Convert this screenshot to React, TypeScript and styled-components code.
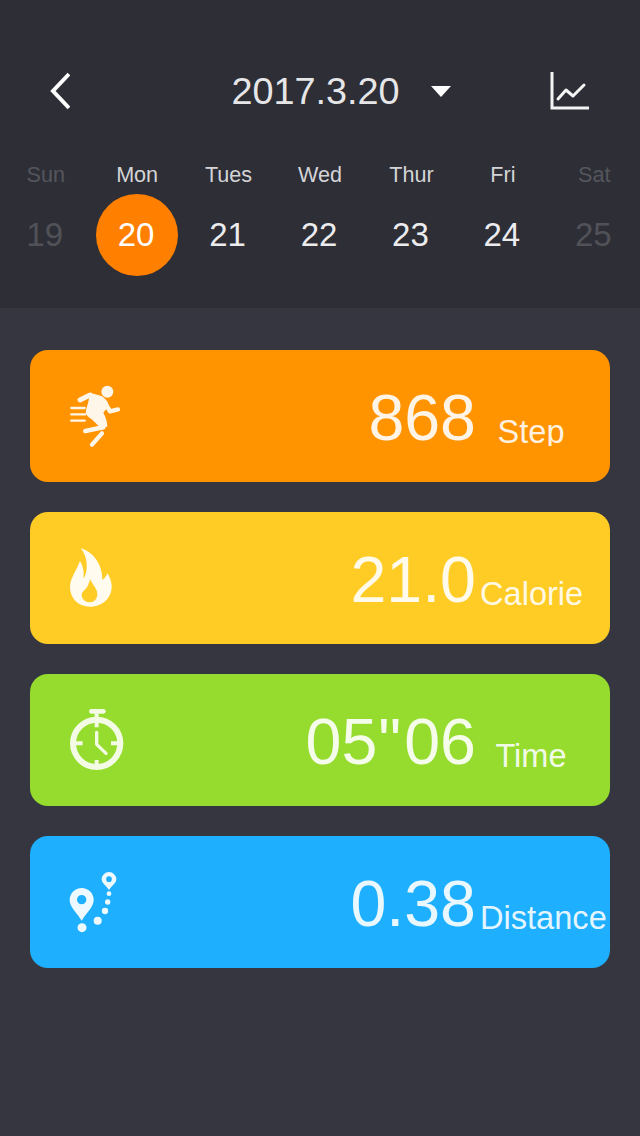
import React from "react";
import styled, { createGlobalStyle } from "styled-components";

const Global = createGlobalStyle`
  html, body { margin: 0; padding: 0; background: #353640; }
  body { font-family: "Liberation Sans", Arial, sans-serif; }
`;

const Page = styled.div`
  width: 640px;
  height: 1136px;
  background: #353640;
  overflow: hidden;
`;

const Header = styled.header`
  height: 308px;
  background: #2d2e36;
  box-sizing: border-box;
  padding-top: 72px;
`;

const TopBar = styled.div`
  display: grid;
  grid-template-columns: 1fr auto 1fr;
  align-items: center;
  height: 38px;
  padding: 0 50px;
`;

const BackIcon = styled.svg`
  justify-self: start;
`;

const ChartIcon = styled.svg`
  justify-self: end;
`;

const DateButton = styled.div`
  display: flex;
  align-items: center;
  gap: 31px;
  margin-left: 42px;
  font-size: 37.8px;
  line-height: 38px;
  color: #e6e6e8;
`;

const Caret = styled.span`
  width: 0;
  height: 0;
  border-left: 10px solid transparent;
  border-right: 10px solid transparent;
  border-top: 11px solid #ffffff;
`;

const Week = styled.div`
  display: grid;
  grid-template-columns: repeat(7, 1fr);
  margin-top: 50px;
`;

const Day = styled.div`
  display: flex;
  flex-direction: column;
  align-items: center;
`;

const DayName = styled.div<{ $muted: boolean }>`
  font-size: 21.6px;
  line-height: 30px;
  color: ${(p) => (p.$muted ? "#55565c" : "#d4d4d7")};
`;

const DayNumber = styled.div<{ $muted: boolean; $active: boolean }>`
  width: 82px;
  height: 82px;
  box-sizing: border-box;
  padding-right: 2px;
  margin-top: 4px;
  border-radius: 50%;
  display: flex;
  align-items: center;
  justify-content: center;
  font-size: 33px;
  color: ${(p) => (p.$muted ? "#515258" : p.$active ? "#ffffff" : "#ececee")};
  background: ${(p) => (p.$active ? "#ff8000" : "transparent")};
`;

const Cards = styled.main`
  display: flex;
  flex-direction: column;
  gap: 30px;
  padding: 42px 30px 0;
`;

const Card = styled.section<{ $color: string }>`
  height: 132px;
  border-radius: 18px;
  background: ${(p) => p.$color};
  display: flex;
  align-items: flex-start;
  padding-left: 20px;
  color: rgba(255, 255, 255, 0.9);
`;

const IconSlot = styled.svg`
  width: 90px;
  height: 90px;
  margin-top: 21px;
  flex: none;
`;

const Value = styled.div`
  margin-left: auto;
  font-size: 64.5px;
  line-height: 70px;
  margin-top: 33px;
  white-space: nowrap;
`;

const Quote = styled.span`
  margin: 0 3px 0 1px;
`;

const Label = styled.div<{ $clipped: boolean }>`
  width: 102px;
  height: ${(p) => (p.$clipped ? "33px" : "38px")};
  margin: 63px 28px 0 4px;
  flex: none;
  font-size: 32.6px;
  line-height: 38px;
  text-align: center;
  white-space: nowrap;
  overflow-x: visible;
  overflow-y: ${(p) => (p.$clipped ? "clip" : "visible")};
`;

const Runner = () => (
  <IconSlot viewBox="0 0 270 270" fill="#fff6ea">
    <g transform="translate(0 -3)">
      <circle cx="172" cy="65" r="18" />
      <path d="M90 90 L120 75" fill="none" stroke="#fff6ea" strokeWidth="15" strokeLinecap="round" />
      <path d="M120 68 L155 78 Q175 92 176 108 L160 128 Q172 150 172 170 L150 172 L125 148 Q104 136 108 120 L115 96 Z" />
      <path d="M166 100 L180 124 L204 118" fill="none" stroke="#fff6ea" strokeWidth="13" strokeLinecap="round" strokeLinejoin="round" />
      <path d="M106 183 L160 172" fill="none" stroke="#fff6ea" strokeWidth="14" strokeLinecap="round" />
      <path d="M156 190 L126 224" fill="none" stroke="#fff6ea" strokeWidth="13" strokeLinecap="round" />
      <path d="M64 114 H104 M64 133 H106 M64 152 H104" fill="none" stroke="#fff6ea" strokeWidth="7" strokeLinecap="round" />
    </g>
  </IconSlot>
);

const Flame = () => (
  <IconSlot viewBox="0 0 270 270" fill="#fffbee">
    <g transform="translate(0 6)">
      <path
        fillRule="evenodd"
        d="M92 40 C125 48 158 85 157 135 C165 130 170 122 172 115 C182 130 185 145 185 155 C185 190 155 215 120 215 C85 215 60 190 60 155 C60 130 78 110 90 78 C100 95 103 110 100 130 C112 120 118 70 92 40 Z M120 132 C128 150 142 160 142 178 C142 192 132 202 120 202 C106 202 95 192 95 180 C95 170 105 165 110 158 C115 150 118 142 120 132 Z"
      />
    </g>
  </IconSlot>
);

const Timer = () => (
  <IconSlot viewBox="0 0 270 270" fill="none" stroke="#f3fbe4">
    <circle cx="140" cy="145" r="71" strokeWidth="18" />
    <path d="M124 49 H160" strokeWidth="14" strokeLinecap="round" />
    <path d="M140 55 V97 M140 195 V212 M72 145 H98 M183 145 H208" strokeWidth="12" />
    <path d="M140 112 V148 L168 175" strokeWidth="10" strokeLinecap="round" strokeLinejoin="round" />
  </IconSlot>
);

const Pins = () => (
  <IconSlot viewBox="0 0 270 270" fill="#eef9ff">
    <g transform="translate(0 9)">
      <path fillRule="evenodd" d="M95 182 C82 160 59 142 59 120 A36 36 0 0 1 131 120 C131 142 108 160 95 182 Z M95 105 A14 14 0 1 0 95 133 A14 14 0 1 0 95 105 Z" />
      <path fillRule="evenodd" d="M177 90 C169 77 155 70 155 58 A22 22 0 0 1 199 58 C199 70 185 77 177 90 Z M177 49 A8.5 8.5 0 1 0 177 66 A8.5 8.5 0 1 0 177 49 Z" />
      <circle cx="96" cy="203" r="13.5" />
      <circle cx="143" cy="182" r="12" />
      <circle cx="165" cy="153" r="9.5" />
      <circle cx="173" cy="126" r="8" />
      <circle cx="177" cy="101" r="7" />
    </g>
  </IconSlot>
);

const days = [
  ["Sun", "19", true],
  ["Mon", "20", false],
  ["Tues", "21", false],
  ["Wed", "22", false],
  ["Thur", "23", false],
  ["Fri", "24", false],
  ["Sat", "25", true],
] as const;

const stats = [
  { color: "#ff9300", value: "868", label: "Step", Icon: Runner },
  { color: "#ffcc26", value: "21.0", label: "Calorie", Icon: Flame },
  { color: "#96dc2f", value: "05|06", label: "Time", Icon: Timer },
  { color: "#1eb0ff", value: "0.38", label: "Distance", Icon: Pins },
];

export default function App() {
  return (
    <Page>
      <Global />
      <Header>
        <TopBar>
          <BackIcon width="20" height="38" viewBox="0 0 20 38" fill="none" stroke="#fff" strokeWidth="4">
            <path d="M19 2 L3 19 L19 36" />
          </BackIcon>
          <DateButton>
            2017.3.20
            <Caret />
          </DateButton>
          <ChartIcon width="40" height="38" viewBox="0 0 40 38" fill="none" stroke="#f4f4f4" strokeWidth="3">
            <path d="M2 0 V36 H39" />
            <path d="M8 27 L16 18 L23 24 L34 13" strokeLinecap="round" strokeLinejoin="round" />
          </ChartIcon>
        </TopBar>
        <Week>
          {days.map(([name, num, muted]) => (
            <Day key={name}>
              <DayName $muted={muted}>{name}</DayName>
              <DayNumber $muted={muted} $active={num === "20"}>
                {num}
              </DayNumber>
            </Day>
          ))}
        </Week>
      </Header>
      <Cards>
        {stats.map(({ color, value, label, Icon }) => {
          const [a, b] = value.split("|");
          return (
            <Card key={label} $color={color}>
              <Icon />
              <Value>
                {a}
                {b !== undefined && (
                  <>
                    <Quote>"</Quote>
                    {b}
                  </>
                )}
              </Value>
              <Label $clipped={label === "Step"}>{label}</Label>
            </Card>
          );
        })}
      </Cards>
    </Page>
  );
}
